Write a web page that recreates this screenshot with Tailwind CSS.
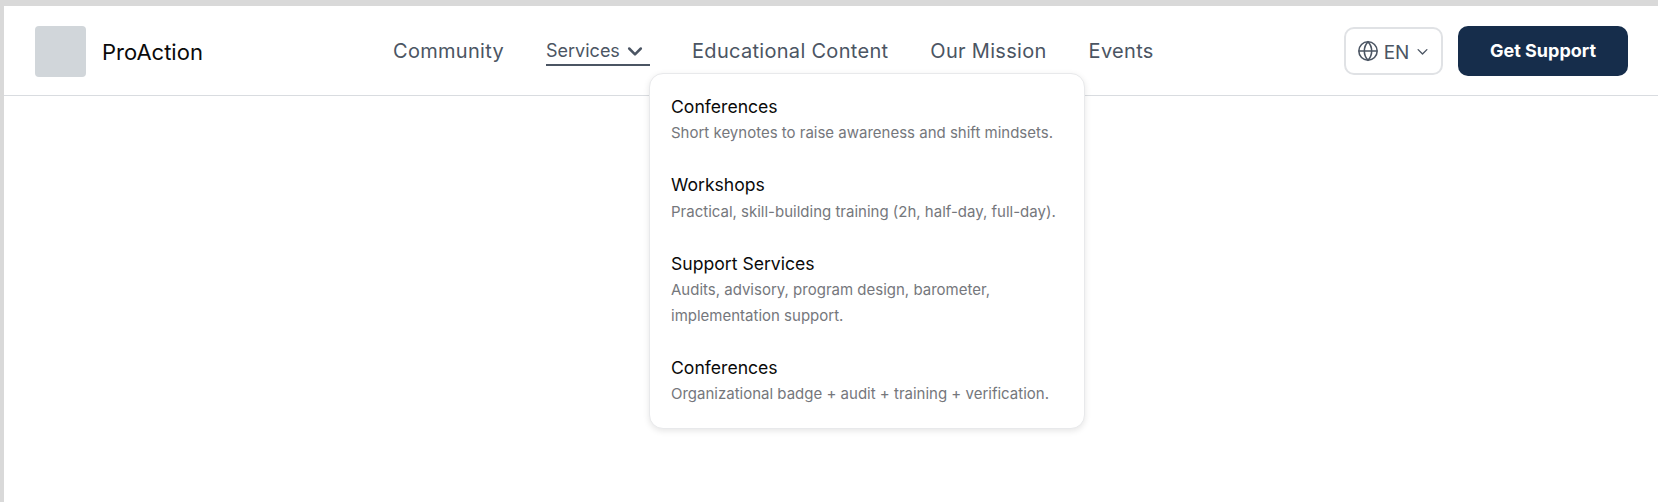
<!DOCTYPE html>
<html lang="en">

<head>
    <meta charset="UTF-8" />
    <meta name="viewport" content="width=device-width, initial-scale=1" />
    <title>ProAction</title>
    <script src="https://cdn.jsdelivr.net/npm/@tailwindcss/browser@4"></script>
</head>

<body class="h-[502px] overflow-hidden bg-[#d9d9d9] pt-[6px] pl-[4px] font-[Inter,sans-serif]">
    <div class="h-full bg-white">
        <header class="relative flex h-[90px] items-center border-b border-[#d9dce0] pt-[1px] pl-[31px] pr-[30px]">
            <a href="#" class="flex w-[358px] items-center gap-[16px]">
                <div class="size-[51px] rounded-[4px] bg-[#d1d6da]"></div>
                <span class="pt-[2px] text-[22px] leading-none text-[#0a0a0a]">ProAction</span>
            </a>

            <nav class="flex items-center gap-[42px] text-[20px] tracking-[0.3px] text-[#4b5563]">
                <a href="#">Community</a>
                <button class="flex h-[30px] w-[104px] items-center gap-[5px] border-b-2 border-[#4b5563] pt-[1px] text-[18px] tracking-normal">
                    Services
                    <svg class="size-[20px]" viewBox="0 0 24 24" fill="none" stroke="currentColor" stroke-width="3" stroke-linecap="round" stroke-linejoin="round">
                        <path d="m5 9 7 7 7-7" />
                    </svg>
                </button>
                <a href="#">Educational Content</a>
                <a href="#">Our Mission</a>
                <a href="#">Events</a>
            </nav>

            <div class="ml-auto flex items-center gap-[15px]">
                <button class="flex h-[48px] w-[99px] items-center justify-center gap-[5px] rounded-[10px] border-2 border-[#e0e2e5] text-[19px] text-[#4b5563]">
                    <svg class="size-[22px]" viewBox="0 0 24 24" fill="none" stroke="currentColor" stroke-width="1.700">
                        <circle cx="12" cy="12" r="10" />
                        <path d="M2 12h20M12 2c3 3 4 6.500 4 10s-1 7-4 10c-3-3-4-6.500-4-10s1-7 4-10Z" />
                    </svg>
                    <span class="pt-[4px]">EN</span>
                    <svg class="ml-[1px] size-[15px]" viewBox="0 0 24 24" fill="none" stroke="currentColor" stroke-width="2.200" stroke-linecap="round" stroke-linejoin="round">
                        <path d="m5 9 7 7 7-7" />
                    </svg>
                </button>
                <button class="h-[50px] w-[170px] rounded-[10px] bg-[#162d4b] pb-[2px] text-[18px] font-bold text-white">Get Support</button>
            </div>

            <!-- services dropdown -->
            <div class="absolute left-[645px] top-[67px] w-[436px] rounded-[14px] border border-[#e8e9eb] bg-white px-[21px] pt-[20px] pb-[20px] shadow-[0_2px_6px_rgba(0,0,0,0.1)]">
                <div class="flex flex-col gap-[25.6px]">
                    <a href="#" class="block">
                        <div class="text-[17.6px] leading-[26.4px] text-[#0a0a0a]">Conferences</div>
                        <p class="text-[15px] leading-[26.25px] text-[#75777c]">Short keynotes to raise awareness and shift mindsets.</p>
                    </a>
                    <a href="#" class="block">
                        <div class="text-[17.6px] leading-[26.4px] text-[#0a0a0a]">Workshops</div>
                        <p class="text-[15px] leading-[26.25px] text-[#75777c]">Practical, skill-building training (2h, half-day, full-day).</p>
                    </a>
                    <a href="#" class="block">
                        <div class="text-[17.6px] leading-[26.4px] text-[#0a0a0a]">Support Services</div>
                        <p class="text-[15px] leading-[26.25px] text-[#75777c]">Audits, advisory, program design, barometer, implementation support.</p>
                    </a>
                    <a href="#" class="block">
                        <div class="text-[17.6px] leading-[26.4px] text-[#0a0a0a]">Conferences</div>
                        <p class="text-[15px] leading-[26.25px] text-[#75777c]">Organizational badge + audit + training + verification.</p>
                    </a>
                </div>
            </div>
        </header>
    </div>
</body>

</html>
